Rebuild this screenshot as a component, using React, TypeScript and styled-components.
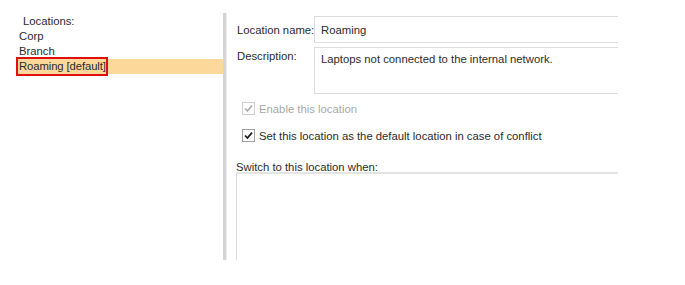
import React from "react";
import styled, { createGlobalStyle } from "styled-components";

const Global = createGlobalStyle`
  html, body { margin: 0; padding: 0; background: #ffffff; }
  body { font-family: "Liberation Sans", Arial, sans-serif; font-size: 11.3px; color: #2b2b2b; }
`;

const Page = styled.div`
  display: flex;
  width: 685px;
  height: 285px;
  background: #fff;
  white-space: nowrap;
`;

const LeftPanel = styled.div`
  width: 223px;
  flex-shrink: 0;
  padding-top: 14px;
  display: flex;
  flex-direction: column;
`;

const ListTitle = styled.div`
  line-height: 15px;
  padding-left: 23px;
`;

const ListItem = styled.div<{ $selected?: boolean }>`
  line-height: 15px;
  height: 15px;
  margin-left: 17px;
  padding-left: 2px;
  display: flex;
  align-items: center;
  background: ${(p) => (p.$selected ? "#fcd89a" : "transparent")};
`;

const Focused = styled.span`
  margin-left: -1px;
  padding: 0 0 0 1px;
  line-height: 15px;
  outline: 2px solid #e01010;
  outline-offset: 0;
  display: inline-block;
  white-space: nowrap;
  letter-spacing: -0.1px;
`;

const Divider = styled.div`
  width: 3px;
  flex-shrink: 0;
  margin-top: 13px;
  height: 247px;
  background: #d4d4d4;
  border-right: 1px solid #ececec;
`;

const RightPanel = styled.div`
  flex: 1;
  padding: 16px 0 0 9px;
  display: flex;
  flex-direction: column;
`;

const FormRow = styled.div`
  display: flex;
  margin-bottom: 4px;
`;

const Label = styled.div<{ $center?: boolean }>`
  width: 77px;
  flex-shrink: 0;
  padding-left: 1px;
  white-space: nowrap;
  display: flex;
  align-items: ${(p) => (p.$center ? "center" : "flex-start")};
  padding-top: ${(p) => (p.$center ? "0" : "3px")};
`;

const Field = styled.div<{ $h: number; $center?: boolean }>`
  width: 304px;
  height: ${(p) => p.$h}px;
  border: 1px solid #dcdcdc;
  border-right: none;
  padding-left: 6px;
  display: flex;
  align-items: ${(p) => (p.$center ? "center" : "flex-start")};
  padding-top: ${(p) => (p.$center ? "1px" : "5px")};
  box-sizing: border-box;
`;

const CheckRow = styled.div<{ $disabled?: boolean; $mt: number }>`
  display: flex;
  align-items: center;
  gap: 4px;
  margin-top: ${(p) => p.$mt}px;
  margin-left: 6px;
  height: 13px;
  color: ${(p) => (p.$disabled ? "#a8a8a8" : "#2b2b2b")};
`;

const Box = styled.span<{ $disabled?: boolean }>`
  width: 11px;
  height: 11px;
  border: 1px solid ${(p) => (p.$disabled ? "#cfcfcf" : "#a0a0a0")};
  background: #fff;
  display: inline-flex;
  align-items: center;
  justify-content: center;
`;

const SectionLabel = styled.div`
  margin-top: 20px;
  line-height: 10px;
`;

const BigBox = styled.div`
  margin-top: 0;
  width: 382px;
  height: 88px;
  border-top: 2px solid #e4e4e4;
  border-left: 1px solid #dcdcdc;
  box-sizing: border-box;
`;

const Check = ({ color }: { color: string }) => (
  <svg width="9" height="9" viewBox="0 0 9 9">
    <path d="M1 4.5 L3.4 7 L8 1.6" fill="none" stroke={color} strokeWidth="1.7" />
  </svg>
);

export default function App() {
  return (
    <>
      <Global />
      <Page>
        <LeftPanel>
          <ListTitle>Locations:</ListTitle>
          <ListItem>Corp</ListItem>
          <ListItem>Branch</ListItem>
          <ListItem $selected>
            <Focused>Roaming [default]</Focused>
          </ListItem>
        </LeftPanel>
        <Divider />
        <RightPanel>
          <FormRow>
            <Label $center>Location name:</Label>
            <Field $h={27} $center>Roaming</Field>
          </FormRow>
          <FormRow>
            <Label>Description:</Label>
            <Field $h={47}>Laptops not connected to the internal network.</Field>
          </FormRow>
          <CheckRow $disabled $mt={4}>
            <Box $disabled>
              <Check color="#b0b0b0" />
            </Box>
            Enable this location
          </CheckRow>
          <CheckRow $mt={14}>
            <Box>
              <Check color="#1a1a1a" />
            </Box>
            Set this location as the default location in case of conflict
          </CheckRow>
          <SectionLabel>Switch to this location when:</SectionLabel>
          <BigBox />
        </RightPanel>
      </Page>
    </>
  );
}
